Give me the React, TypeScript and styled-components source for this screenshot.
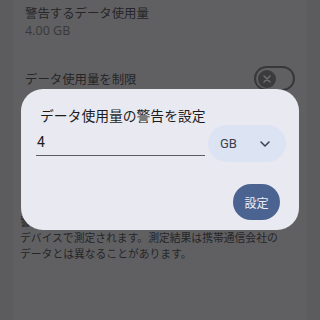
import React from "react"
import styled, { createGlobalStyle } from "styled-components"

const Color = {
    outer: "#5c5c5e",
    page: "#606062",
    text: "#262628",
    subText: "#3a3a3d",
    dialog: "#e9e9f1",
    pill: "#dce3f3",
    primary: "#4a6391",
    onPrimary: "#eef0f6",
    field: "#1d1d20",
    line: "#5c5c62",
}

const GlobalStyle = createGlobalStyle`
    html, body {
        margin: 0;
        padding: 0;
        background: ${Color.outer};
    }
    body {
        font-family: "Noto Sans CJK JP", "Noto Sans", Roboto, sans-serif;
    }
`

const App: React.FC = () => (
    <>
        <GlobalStyle />
        <Screen>
            <Column>
                <SettingItem>
                    <ItemTitle>警告するデータ使用量</ItemTitle>
                    <ItemValue>4.00 GB</ItemValue>
                </SettingItem>
                <SwitchRow>
                    <ItemTitle>データ使用量を制限</ItemTitle>
                    <Switch>
                        <Thumb>
                            <svg width="10" height="10" viewBox="0 0 10 10">
                                <path d="M2 2 L8 8 M8 2 L2 8" stroke="#6c6c70" strokeWidth="1.6" strokeLinecap="round" />
                            </svg>
                        </Thumb>
                    </Switch>
                </SwitchRow>
                <Note>
                    警告のデータ使用量はお使いの
                    <br />
                    デバイスで測定されます。測定結果は携帯通信会社の
                    <br />
                    データとは異なることがあります。
                </Note>
            </Column>
            <Dialog>
                <DialogTitle>データ使用量の警告を設定</DialogTitle>
                <InputRow>
                    <Field>
                        <FieldText>4</FieldText>
                    </Field>
                    <UnitSelect>
                        <span>GB</span>
                        <svg width="10" height="6" viewBox="0 0 10 6">
                            <path d="M1 1 L5 5 L9 1" fill="none" stroke="#3a3f4c" strokeWidth="1.5" strokeLinecap="round" strokeLinejoin="round" />
                        </svg>
                    </UnitSelect>
                </InputRow>
                <Actions>
                    <ConfirmButton>設定</ConfirmButton>
                </Actions>
            </Dialog>
        </Screen>
    </>
)

export default App

const Screen = styled.div`
    position: relative;
    width: 320px;
    height: 320px;
    overflow: hidden;
    background: ${Color.outer};
`

const Column = styled.div`
    margin: 0 13px;
    height: 320px;
    background: ${Color.page};
    display: flex;
    flex-direction: column;
`

const SettingItem = styled.div`
    padding: 4px 0 0 12px;
    display: flex;
    flex-direction: column;
`

const ItemTitle = styled.div`
    font-size: 12.4px;
    line-height: 18px;
    color: ${Color.text};
`

const ItemValue = styled.div`
    font-family: "Noto Sans", Roboto, sans-serif;
    font-size: 12.5px;
    line-height: 17px;
    color: ${Color.subText};
`

const SwitchRow = styled.div`
    margin-top: 27px;
    padding: 0 12px 0 12px;
    display: flex;
    align-items: center;
    justify-content: space-between;
`

const Switch = styled.div`
    width: 41px;
    height: 25px;
    box-sizing: border-box;
    border: 2px solid #38383b;
    border-radius: 13px;
    display: flex;
    align-items: center;
    padding-left: 2px;
`

const Thumb = styled.div`
    width: 18px;
    height: 18px;
    border-radius: 50%;
    background: #3b3b3e;
    display: flex;
    align-items: center;
    justify-content: center;
`

const Note = styled.div`
    margin-top: 122px;
    padding-left: 7px;
    font-size: 10.8px;
    line-height: 16px;
    color: ${Color.text};
`

const Dialog = styled.div`
    position: absolute;
    left: 21px;
    top: 89px;
    width: 278px;
    height: 141px;
    box-sizing: border-box;
    padding: 16px 13px 10px 15px;
    border-radius: 22px;
    background: ${Color.dialog};
    display: flex;
    flex-direction: column;
`

const DialogTitle = styled.div`
    margin-left: 4px;
    font-size: 13.8px;
    line-height: 20px;
    color: #1c1c20;
`

const InputRow = styled.div`
    display: flex;
    align-items: flex-start;
    gap: 3px;
`

const Field = styled.div`
    flex: 1;
    height: 31px;
    box-sizing: border-box;
    border-bottom: 1px solid ${Color.line};
    display: flex;
    align-items: flex-end;
    padding: 0 0 5px 1px;
`

const FieldText = styled.span`
    font-family: Roboto, "Noto Sans", sans-serif;
    font-size: 14px;
    line-height: 16px;
    color: ${Color.field};
`

const UnitSelect = styled.div`
    width: 78px;
    height: 37px;
    border-radius: 19px;
    background: ${Color.pill};
    display: flex;
    align-items: center;
    justify-content: space-between;
    box-sizing: border-box;
    padding: 0 16px 0 12px;
    font-family: Roboto, "Noto Sans", sans-serif;
    font-size: 13px;
    color: #3a3f4c;
`

const Actions = styled.div`
    margin-top: auto;
    display: flex;
    justify-content: flex-end;
    padding-right: 6px;
`

const ConfirmButton = styled.button`
    width: 47px;
    height: 36px;
    border: none;
    border-radius: 18px;
    background: ${Color.primary};
    color: ${Color.onPrimary};
    font-family: "Noto Sans CJK JP", sans-serif;
    font-size: 12px;
    padding: 0;
`
